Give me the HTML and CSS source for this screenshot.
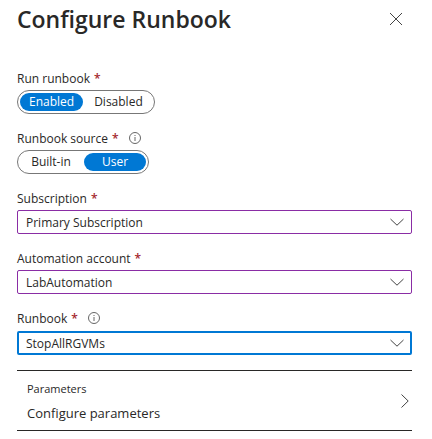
FILE: index.html
```html
<!DOCTYPE html>
<html lang="en">
<head>
<meta charset="utf-8">
<meta name="viewport" content="width=device-width, initial-scale=1">
<title>Configure Runbook</title>
<link rel="stylesheet" href="styles.css">
</head>
<body>
<main class="panel">
  <header class="panel-header">
    <h1 class="title">Configure Runbook</h1>
    <button class="close" type="button" aria-label="Close">
      <svg width="12" height="12" viewBox="0 0 12 12" aria-hidden="true"><path d="M0 0L12 12M12 0L0 12"/></svg>
    </button>
  </header>
  <form class="form">
    <div class="field" role="radiogroup" aria-labelledby="run-label">
      <div class="label" id="run-label">Run runbook <span class="required">*</span></div>
      <div class="toggle">
        <label class="option"><input type="radio" name="run" checked><span>Enabled</span></label>
        <label class="option"><input type="radio" name="run"><span>Disabled</span></label>
      </div>
    </div>
    <div class="field" role="radiogroup" aria-labelledby="source-label">
      <div class="label" id="source-label">Runbook source <span class="required">*</span>
        <svg class="info" width="12" height="12" viewBox="0 0 12 12" aria-hidden="true"><circle cx="6" cy="6" r="5.5"/><path d="M6 5v4M6 3v1"/></svg>
      </div>
      <div class="toggle">
        <label class="option"><input type="radio" name="source"><span>Built-in</span></label>
        <label class="option"><input type="radio" name="source" checked><span>User</span></label>
      </div>
    </div>
    <div class="field">
      <label class="label" for="subscription">Subscription <span class="required">*</span></label>
      <div class="select">
        <select id="subscription"><option>Primary Subscription</option></select>
        <svg width="14" height="8" viewBox="0 0 14 8" aria-hidden="true"><path d="M.5 1L7 7.2 13.500 1"/></svg>
      </div>
    </div>
    <div class="field">
      <label class="label" for="account">Automation account <span class="required">*</span></label>
      <div class="select">
        <select id="account"><option>LabAutomation</option></select>
        <svg width="14" height="8" viewBox="0 0 14 8" aria-hidden="true"><path d="M.5 1L7 7.2 13.500 1"/></svg>
      </div>
    </div>
    <div class="field">
      <label class="label" for="runbook">Runbook <span class="required">*</span>
        <svg class="info" width="12" height="12" viewBox="0 0 12 12" aria-hidden="true"><circle cx="6" cy="6" r="5.5"/><path d="M6 5v4M6 3v1"/></svg>
      </label>
      <div class="select active">
        <select id="runbook"><option>StopAllRGVMs</option></select>
        <svg width="14" height="8" viewBox="0 0 14 8" aria-hidden="true"><path d="M.5 1L7 7.2 13.500 1"/></svg>
      </div>
    </div>
    <button class="parameters" type="button">
      <span class="parameters-text">
        <span class="caption">Parameters</span>
        <span class="action">Configure parameters</span>
      </span>
      <svg width="8" height="14" viewBox="0 0 8 14" aria-hidden="true"><path d="M.5.5L7.200 7 .5 13.500"/></svg>
    </button>
  </form>
</main>
</body>
</html>
```
FILE: styles.css
```css
* {
  box-sizing: border-box;
}

body {
  margin: 0;
  background: #fff;
  color: #292827;
  font-family: "Segoe UI", "Open Sans", sans-serif;
  font-size: 12px;
}

button,
select {
  margin: 0;
  color: inherit;
  font: inherit;
}

svg {
  flex: none;
  fill: none;
  stroke: #444;
  stroke-width: 1;
}

.panel {
  padding: 0 20px 8px 17px;
}

.panel-header {
  display: flex;
  align-items: center;
  justify-content: space-between;
  height: 38px;
}

.title {
  margin: 0;
  font-size: 23px;
  font-weight: 600;
  line-height: 32px;
}

.close {
  display: flex;
  padding: 10px;
  border: 0;
  background: none;
}

.form {
  display: grid;
  gap: 12px;
  padding-top: 28px;
}

.label {
  display: flex;
  align-items: center;
  gap: 4px;
  height: 24px;
}

.required {
  color: #a4262c;
  font-weight: 600;
}

.info {
  margin-left: 6px;
  stroke: #666;
}

.toggle {
  display: inline-flex;
  gap: 2px;
  height: 24px;
  padding: 2px;
  border: 1px solid #777;
  border-radius: 12px;
  vertical-align: top;
}

.option {
  display: grid;
}

.option input,
.option span {
  grid-area: 1 / 1;
}

.option input {
  margin: 0;
  opacity: 0;
}

.option span {
  min-width: 62px;
  padding: 0 9px;
  border-radius: 9px;
  line-height: 18px;
  text-align: center;
}

.option input:checked + span {
  background: #0078d4;
  color: #fff;
  font-weight: 500;
}

.select {
  display: grid;
  align-items: center;
}

.select > * {
  grid-area: 1 / 1;
}

.select select {
  width: 100%;
  height: 24px;
  padding: 0 30px 0 8px;
  border: 1px solid #8a2da5;
  border-radius: 2px;
  background: #fff;
  appearance: none;
}

.select svg {
  justify-self: end;
  margin-right: 8px;
  pointer-events: none;
}

.active {
  padding-top: 1px;
}

.active select {
  padding-left: 7px;
  border: 2px solid #0078d4;
}

.parameters {
  display: flex;
  align-items: center;
  justify-content: space-between;
  height: 61px;
  margin-top: 3px;
  padding: 0 3px 0 10px;
  border: solid #292827;
  border-width: 1px 0;
  background: none;
  text-align: left;
}

.parameters-text {
  display: grid;
  gap: 4px;
}

.caption {
  font-size: 11px;
  line-height: 20px;
}

.action {
  font-size: 13px;
  line-height: 20px;
}
```
